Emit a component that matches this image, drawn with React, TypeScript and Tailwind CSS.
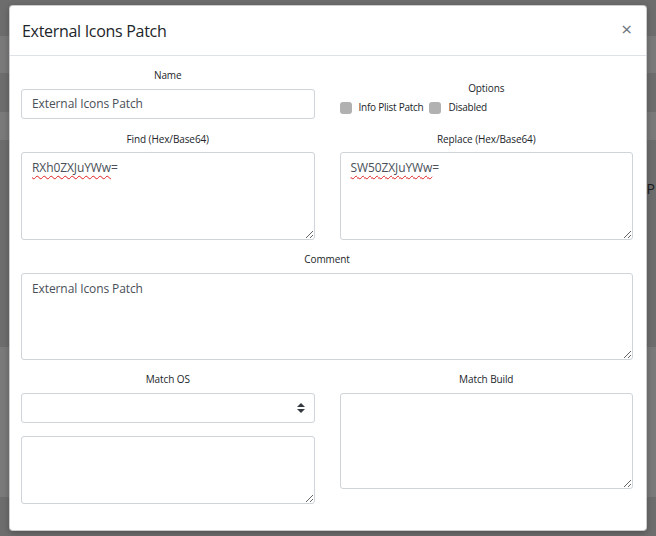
import type { ReactNode } from 'react';

// Page behind the dialog: table stripes, dimmed by the backdrop.
const BANDS: { h: string; light: boolean }[] = [
  { h: 'h-[36px]', light: false },
  { h: 'h-[37px]', light: true },
  { h: 'h-[39px]', light: false },
  { h: 'h-[28px]', light: true },
  { h: 'h-[207px]', light: false },
  { h: 'h-[150px]', light: true },
  { h: 'h-[39px]', light: false },
];

const FONT = 'font-["Open_Sans","Noto_Sans",sans-serif]';

function Label({ children, className = '' }: { children: ReactNode; className?: string }) {
  return (
    <div className={`text-center text-[10px] leading-[14px] tracking-[-0.1px] text-[#212529] ${className}`}>
      {children}
    </div>
  );
}

function Area({ children, className = '' }: { children?: ReactNode; className?: string }) {
  return (
    <div
      className={`resize overflow-hidden rounded-[3px] border border-[#ced4da] bg-white px-[10px] py-[5px] text-[12px] leading-[20px] tracking-[-0.1px] text-[#495057] ${className}`}
    >
      {children}
    </div>
  );
}

function Spelled({ word, tail }: { word: string; tail: string }) {
  return (
    <span>
      <span className="underline decoration-wavy decoration-[#e02020] decoration-1 underline-offset-[3px]">
        {word}
      </span>
      {tail}
    </span>
  );
}

function Check({ label }: { label: string }) {
  return (
    <span className="flex items-center gap-[7px]">
      <span className="h-[12px] w-[12px] rounded-[3px] bg-[#b1b1b1]" />
      <span className="text-[10px] tracking-[-0.25px] text-[#212529]">{label}</span>
    </span>
  );
}

export default function App() {
  return (
    <div className={`relative h-[536px] w-[656px] overflow-hidden ${FONT}`}>
      {/* dimmed page */}
      <div className="flex flex-col">
        {BANDS.map((b, i) => (
          <div
            key={i}
            className={`${b.h} flex items-start justify-end ${b.light ? 'bg-[#7a7a7a]' : 'bg-[#6d6d6d]'}`}
          >
            {i === 4 && <span className="pr-[1px] pt-[38px] text-[14px] text-[#1c1c1c]">P</span>}
          </div>
        ))}
      </div>

      {/* dialog */}
      <div className="absolute inset-0 pl-[9px] pt-[5px]">
        <div className="flex h-[526px] w-[638px] flex-col rounded-[4px] border border-black/20 bg-white shadow-[0_2px_6px_rgba(0,0,0,0.25)]">
          <div className="flex h-[50px] items-center justify-between border-b border-[#dee2e6] pl-[12px] pr-[14px]">
            <h2 className="text-[16px] font-medium tracking-[-0.3px] text-[#212529]">External Icons Patch</h2>
            <span className="pb-[2px] text-[19px] leading-none text-[#6c757d]">×</span>
          </div>

          <div className="flex flex-col pl-[11px] pr-[13px] pt-[12px]">
            {/* name + options */}
            <div className="grid grid-cols-2 gap-[25px]">
              <div>
                <Label className="mb-[7px]">Name</Label>
                <div className="flex h-[30px] items-center rounded-[3px] border border-[#ced4da] px-[10px] text-[12px] tracking-[-0.1px] text-[#495057]">
                  External Icons Patch
                </div>
              </div>
              <div className="pt-[13px]">
                <Label className="mb-[5px]">Options</Label>
                <div className="flex items-center gap-[6px]">
                  <Check label="Info Plist Patch" />
                  <Check label="Disabled" />
                </div>
              </div>
            </div>

            {/* find / replace */}
            <div className="mt-[13px] grid grid-cols-2 gap-[25px]">
              <div>
                <Label className="mb-[6px]">Find (Hex/Base64)</Label>
                <Area className="h-[88px]">
                  <Spelled word="RXh0ZXJuYWw" tail="=" />
                </Area>
              </div>
              <div>
                <Label className="mb-[6px]">Replace (Hex/Base64)</Label>
                <Area className="h-[88px]">
                  <Spelled word="SW50ZXJuYWw" tail="=" />
                </Area>
              </div>
            </div>

            {/* comment */}
            <Label className="mb-[7px] mt-[12px]">Comment</Label>
            <Area className="h-[87px]">External Icons Patch</Area>

            {/* match */}
            <div className="mt-[12px] grid grid-cols-2 gap-[25px]">
              <div>
                <Label className="mb-[7px]">Match OS</Label>
                <div className="flex h-[30px] items-center justify-end rounded-[3px] border border-[#ced4da] pr-[9px]">
                  <svg width="8" height="10" viewBox="0 0 4 5">
                    <path d="M2 0L0 2h4zm0 5L0 3h4z" fill="#343a40" />
                  </svg>
                </div>
                <Area className="mt-[13px] h-[68px]" />
              </div>
              <div>
                <Label className="mb-[7px]">Match Build</Label>
                <Area className="h-[96px]" />
              </div>
            </div>
          </div>
        </div>
      </div>
    </div>
  );
}
